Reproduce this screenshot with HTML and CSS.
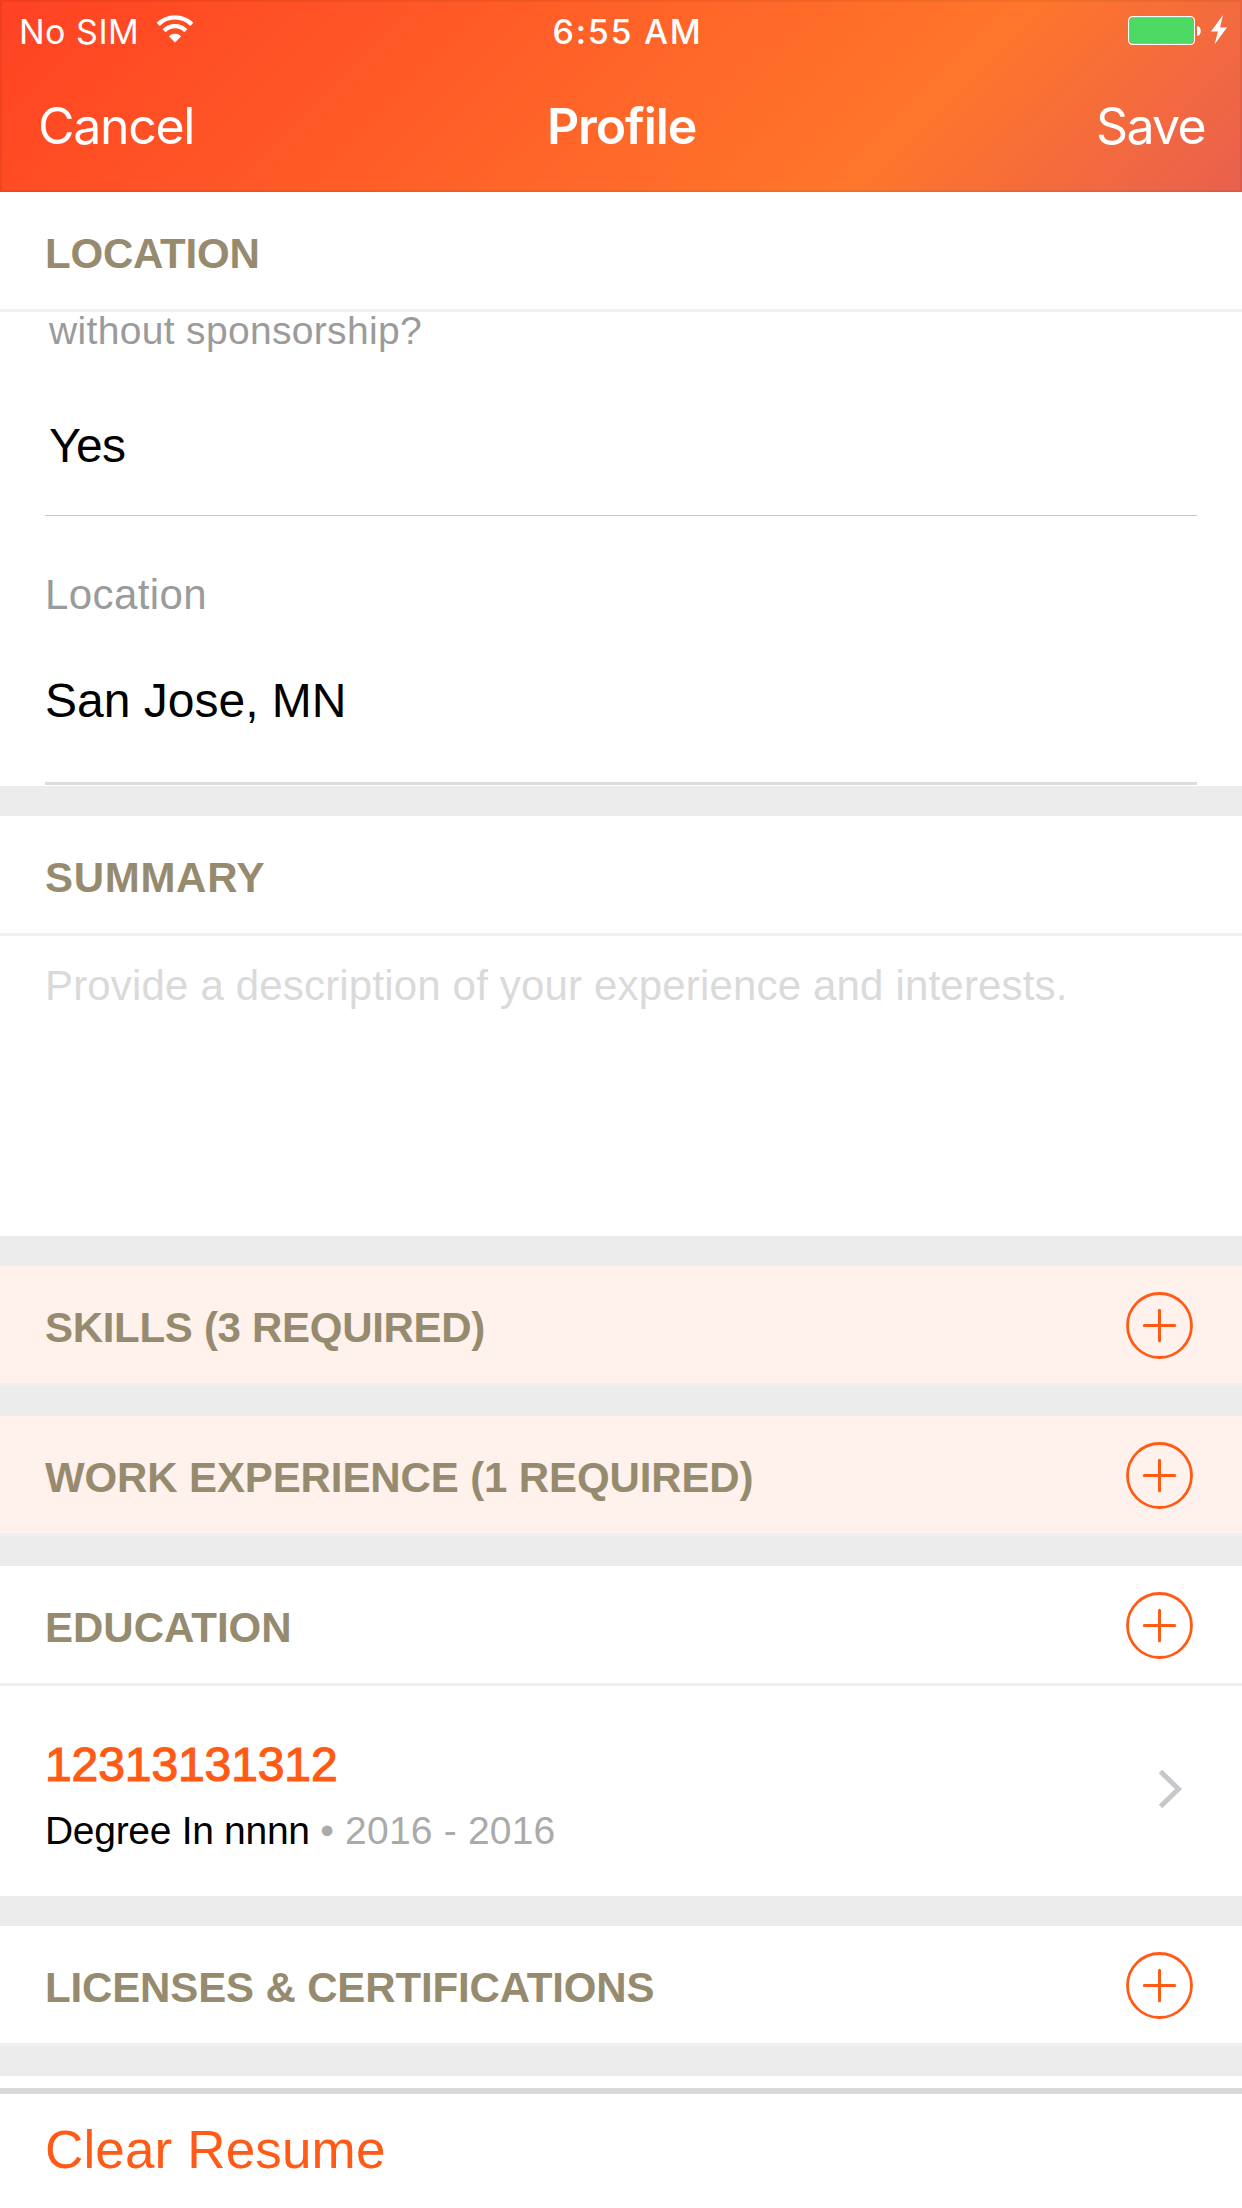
FILE: index.html
```html
<!DOCTYPE html>
<html lang="en">
<head>
<meta charset="utf-8">
<title>Profile</title>
<link rel="stylesheet" href="styles.css">
</head>
<body>
<svg class="defs" width="0" height="0" aria-hidden="true">
  <symbol id="add" viewBox="0 0 68 68">
    <circle cx="33.500" cy="34.500" r="32" fill="none" stroke="currentColor" stroke-width="2.8"/>
    <path d="M33.500 19.300V49.700M18.300 34.500H48.700" stroke="currentColor" stroke-width="3" stroke-linecap="round"/>
  </symbol>
</svg>
<div class="screen">
  <header class="top">
    <div class="status">
      <div class="carrier">
        <span class="sim">No SIM</span>
        <svg class="wifi" width="38" height="28" viewBox="0 0 38 28" fill="none" stroke="#fff">
          <path d="M2.2 9.400A23.5 23.5 0 0 1 35.8 9.400" stroke-width="4.4"/>
          <path d="M8.1 15.8A15 15 0 0 1 29.900 15.8" stroke-width="4.2"/>
          <path d="M12.8 21.2A9 9 0 0 1 25.2 21.2L19 27.5Z" fill="#fff" stroke="none"/>
        </svg>
      </div>
      <span class="time">6:55 AM</span>
      <div class="power">
        <svg width="101" height="32" viewBox="0 0 101 32">
          <rect x="1.6" y="2.6" width="65.8" height="27.8" rx="4" fill="none" stroke="#fff" stroke-width="1.2"/>
          <rect x="3" y="4" width="63" height="25" rx="3" fill="#4cd964"/>
          <path d="M70 12C75 12 75 22 70 22Z" fill="#fff"/>
          <path d="M96 1L84 17.500H91L87.500 30.500L100 13.500H93Z" fill="#fff"/>
        </svg>
      </div>
    </div>
    <nav class="nav">
      <a class="cancel">Cancel</a>
      <h1 class="name">Profile</h1>
      <a class="save">Save</a>
    </nav>
  </header>

  <section>
    <div class="head"><h2 class="t-location">LOCATION</h2></div>
    <div class="fields">
      <label class="question">without sponsorship?</label>
      <div class="answer">Yes</div>
      <label class="label">Location</label>
      <div class="value">San Jose, MN</div>
    </div>
  </section>

  <section>
    <div class="head"><h2 class="t-summary">SUMMARY</h2></div>
    <div class="summary">Provide a description of your experience and interests.</div>
  </section>

  <section>
    <div class="head required"><h2 class="t-skills">SKILLS (3 REQUIRED)</h2><svg class="add"><use href="#add"/></svg></div>
  </section>

  <section>
    <div class="head required"><h2 class="t-work">WORK EXPERIENCE (1 REQUIRED)</h2><svg class="add"><use href="#add"/></svg></div>
  </section>

  <section>
    <div class="head"><h2 class="t-education">EDUCATION</h2><svg class="add"><use href="#add"/></svg></div>
    <div class="entry">
      <div>
        <div class="school">12313131312</div>
        <div class="degree">Degree In nnnn <span class="dates">• 2016 - 2016</span></div>
      </div>
      <svg class="chevron" width="26" height="42" viewBox="0 0 26 42"><path d="M2.500 3.500L20.500 21L2.500 38.500" fill="none" stroke="#c7c7cc" stroke-width="5"/></svg>
    </div>
  </section>

  <section>
    <div class="head"><h2 class="t-licenses">LICENSES &amp; CERTIFICATIONS</h2><svg class="add"><use href="#add"/></svg></div>
  </section>

  <footer class="footer"><a class="clear">Clear Resume</a></footer>
</div>
</body>
</html>
```

FILE: styles.css
```css
* { box-sizing: border-box; }

body {
  margin: 0;
  background: #ececec;
  font-family: "Liberation Sans", Arial, sans-serif;
  color: #000;
}

.defs { display: block; height: 0; }

.screen {
  width: 1242px;
  height: 2208px;
  overflow: hidden;
  display: flex;
  flex-direction: column;
  white-space: nowrap;
}

.top {
  height: 192px;
  flex: none;
  color: #fff;
  font-family: Inter, Roboto, sans-serif;
  background: linear-gradient(135deg, #ff4223 0%, #ff762b 72%, #e9604f 100%);
  box-shadow: inset 0 0 0 2px rgba(0, 0, 0, .06);
}

.status, .nav {
  display: grid;
  grid-template-columns: 1fr auto 1fr;
  align-items: center;
}

.status {
  height: 60px;
  padding: 2px 14px 0 19px;
  font-size: 34px;
}

.carrier { display: flex; align-items: center; gap: 16.500px; }
.sim { letter-spacing: .5px; }
.wifi { margin-bottom: 5px; }
.time { font-weight: 500; letter-spacing: 1.7px; padding-left: 8px; }
.power { display: flex; justify-content: flex-end; margin-bottom: 2px; }

.nav {
  height: 132px;
  padding: 0 37px 0 38px;
  font-size: 50px;
}

.name { margin: 0; font-size: 50px; font-weight: 600; letter-spacing: -1.1px; }
.cancel { letter-spacing: -1.3px; }
.save { justify-self: end; letter-spacing: -1.7px; }

section { margin-bottom: 30px; background: #fff; flex: none; }

.head {
  height: 120px;
  padding: 6px 48px 0 45px;
  border-bottom: 3px solid #efeff4;
  display: flex;
  align-items: center;
  justify-content: space-between;
}

.head h2 { margin: 0; font-size: 42px; line-height: 50px; color: #968b6e; }
.head .t-location { letter-spacing: -.2px; }
.head .t-summary { letter-spacing: .7px; }
.head .t-skills { letter-spacing: -.3px; }
.head .t-work { letter-spacing: -.12px; }
.head .t-licenses { letter-spacing: -.14px; }
.required { background: #fff1ec; }
.add { width: 68px; height: 68px; margin-top: -5px; color: #ff5a16; }

.fields { height: 474px; padding: 0 45px; display: flex; flex-direction: column; }
.question {
  padding-left: 4px;
  font-size: 39px;
  line-height: 37px;
  letter-spacing: .33px;
  color: #9b9b9b;
}
.answer {
  margin-top: 67px;
  padding: 0 4px 39px;
  border-bottom: 1px solid #c8c7cc;
  font-size: 48px;
  line-height: 60px;
  letter-spacing: -.6px;
}
.label {
  margin-top: 54px;
  font-size: 42px;
  line-height: 50px;
  letter-spacing: .4px;
  color: #9b9b9b;
}
.value {
  margin-top: 51px;
  padding-bottom: 51px;
  border-bottom: 3px solid #dcdcdc;
  font-size: 48px;
  line-height: 60px;
}

.summary {
  height: 300px;
  padding: 25px 45px;
  font-size: 42px;
  line-height: 50px;
  letter-spacing: .17px;
  color: #dadada;
}

.entry {
  height: 210px;
  padding: 51px 58px 0 45px;
  display: flex;
  align-items: flex-start;
  justify-content: space-between;
}
.school {
  font-size: 48px;
  line-height: 56px;
  letter-spacing: -.1px;
  color: #ff5a16;
  -webkit-text-stroke: 1.2px #ff5a16;
}
.degree { margin-top: 13px; font-size: 39px; line-height: 50px; letter-spacing: -.3px; }
.dates { color: #aaa; letter-spacing: .2px; }
.chevron { margin-top: 31px; }

.footer {
  flex: 1;
  padding: 26px 45px 0;
  background: #fff;
  border-top: 6px solid #dadada;
  box-shadow: 0 -12px #fff;
  margin-top: 12px;
  font-size: 53px;
  line-height: 60px;
  letter-spacing: .15px;
  color: #ff5a16;
}
```
